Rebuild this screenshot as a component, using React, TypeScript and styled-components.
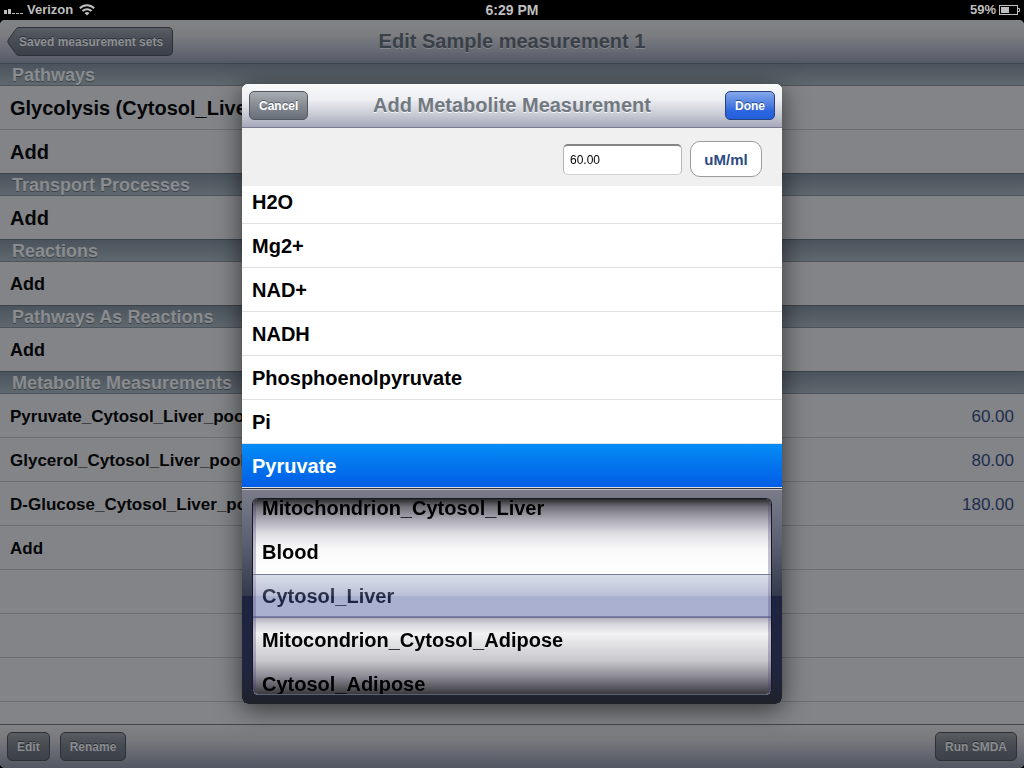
import React, { useState } from "react";
import styled, { createGlobalStyle, css } from "styled-components";

const GlobalStyle = createGlobalStyle`
  *, *::before, *::after { box-sizing: border-box; }
  html, body { margin: 0; padding: 0; background: #000; }
  body, button, input {
    font-family: "Liberation Sans", Arial, Helvetica, sans-serif;
  }
  button { cursor: pointer; }
  ul { list-style: none; margin: 0; padding: 0; }
`;

const Screen = styled.div`
  display: flex;
  flex-direction: column;
  min-height: 100vh;
  background: #000;
`;

const StatusBar = styled.div`
  display: grid;
  grid-template-columns: 1fr auto 1fr;
  align-items: center;
  height: 20px;
  padding: 0 4px;
  color: #bfbfbf;
  font-size: 13px;
  font-weight: bold;
  line-height: 20px;
`;

const Clock = styled.span`
  font-size: 14px;
`;

const StatusGroup = styled.div<{ $end?: boolean }>`
  display: flex;
  align-items: center;
  gap: 3px;
  justify-content: ${(p) => (p.$end ? "flex-end" : "flex-start")};
`;

const AppWindow = styled.div`
  flex: 1;
  display: flex;
  flex-direction: column;
  border-radius: 5px;
  overflow: hidden;
  background: #838487;
`;

const NavBar = styled.header`
  display: grid;
  grid-template-columns: 1fr auto 1fr;
  align-items: center;
  height: 44px;
  padding: 0 7px;
  border-bottom: 1px solid #3d414c;
  background: linear-gradient(#828385, #7b7d80 35%, #6e7079 60%, #555a67);
`;

const PageTitle = styled.h1`
  margin: 0;
  padding-bottom: 2px;
  color: #394047;
  font-size: 20px;
  line-height: 24px;
  text-shadow: 0 1px 0 #85868a;
`;

const BackButton = styled.button`
  display: flex;
  justify-self: start;
  height: 29px;
  padding: 0;
  border: 0;
  background: none;
  color: #8f9194;
  font-size: 12px;
  font-weight: bold;
  line-height: 28px;
  text-shadow: 0 -1px 0 #2b2f36;
`;

const BackLabel = styled.span`
  height: 29px;
  padding: 0 9px 0 0;
  border: 1px solid #2c3038;
  border-left: 0;
  border-radius: 0 5px 5px 0;
  background: linear-gradient(#595d63, #464b54 50%, #3b404a);
`;

const SectionTitle = styled.h2`
  position: relative;
  height: 23px;
  margin: -1px 0 0;
  padding: 0 12px;
  border-top: 1px solid #3b434b;
  border-bottom: 1px solid #4d545b;
  background: linear-gradient(#4b545d, #5f686e);
  color: #8a8c8f;
  font-size: 18px;
  line-height: 22px;
  text-shadow: 0 1px 0 #3c4349;
`;

const RowButton = styled.button<{ $size: number }>`
  display: flex;
  align-items: center;
  justify-content: space-between;
  width: 100%;
  height: 44px;
  padding: 2px 10px 0;
  border: 0;
  border-bottom: 1px solid #6c6d71;
  background: #838487;
  color: #050608;
  font-size: ${(p) => p.$size}px;
  font-weight: bold;
  text-align: left;
`;

const RowValue = styled.span`
  color: #1e2d4d;
  font-weight: normal;
`;

const EmptyRows = styled.div`
  flex: 1;
  background: repeating-linear-gradient(#838487 0 43px, #6c6d71 43px 44px);
`;

const Toolbar = styled.footer`
  display: flex;
  align-items: center;
  gap: 10px;
  height: 44px;
  padding: 0 7px;
  border-top: 1px solid #45464b;
  background: linear-gradient(#818284, #77797c 35%, #696b74 60%, #525763);
`;

const Spacer = styled.div`
  flex: 1;
`;

type Tone = "dim" | "gray" | "blue";

const tones = {
  dim: css`
    border-color: #2c3038;
    background: linear-gradient(#595d61, #464a51 50%, #3b404a);
    color: #8b8d90;
    text-shadow: 0 -1px 0 #2b2f36;
  `,
  gray: css`
    border-color: #53575e;
    background: linear-gradient(#a9adb3, #868b93 50%, #686e78);
    color: #fff;
    text-shadow: 0 -1px 0 #555a62;
  `,
  blue: css`
    border-color: #27427f;
    background: linear-gradient(#86a8ea, #4a7be0 50%, #2c66de 70%, #245fdc);
    color: #fff;
    text-shadow: 0 -1px 0 #2b4c94;
  `,
};

const BarButton = styled.button<{ $tone: Tone }>`
  height: 29px;
  padding: 1px 9px 0;
  border: 1px solid;
  border-radius: 5px;
  font-size: 12px;
  font-weight: bold;
  line-height: 27px;
  ${(p) => tones[p.$tone]}
`;

const Backdrop = styled.div`
  position: fixed;
  inset: 20px 0 0;
  display: flex;
  align-items: center;
  justify-content: center;
`;

const Sheet = styled.section`
  display: flex;
  flex-direction: column;
  width: 540px;
  max-width: 100%;
  height: 620px;
  max-height: 100%;
  border-radius: 6px;
  overflow: hidden;
  background: #fff;
  box-shadow: 0 5px 26px rgba(0, 0, 0, 0.6);
`;

const SheetBar = styled.header`
  flex: none;
  display: grid;
  grid-template-columns: 1fr auto 1fr;
  align-items: center;
  height: 44px;
  padding: 0 7px;
  border-bottom: 1px solid #797b92;
  background: linear-gradient(#f8f9fa, #eff0f3 35%, #cfd1da 65%, #a5a8ba);

  & > :first-child { justify-self: start; }
  & > :last-child { justify-self: end; }
`;

const SheetTitle = styled.h2`
  margin: 0;
  padding-bottom: 2px;
  color: #717880;
  font-size: 20px;
  line-height: 24px;
  text-shadow: 0 1px 0 #f4f5f7;
`;

const AmountBar = styled.div`
  flex: none;
  display: flex;
  align-items: center;
  justify-content: flex-end;
  gap: 8px;
  height: 58px;
  padding: 4px 20px 0;
  background: #f0f0f0;
`;

const AmountInput = styled.input`
  width: 119px;
  height: 31px;
  padding: 0 6px;
  border: 1px solid #b4b4b4;
  border-top: 2px solid #858585;
  border-bottom-color: #cfcfcf;
  border-radius: 5px;
  background: #fff;
  color: #000;
  font-size: 12px;
  outline: 0;
`;

const UnitButton = styled.button`
  width: 72px;
  height: 36px;
  padding: 1px 0 0;
  border: 1px solid #9b9b9b;
  border-radius: 10px;
  background: #fff;
  color: #2c4a83;
  font-size: 15px;
  font-weight: bold;
`;

const MetaboliteList = styled.div`
  flex: 1;
  min-height: 0;
  display: flex;
  flex-direction: column;
  justify-content: flex-end;
  overflow: hidden;
`;

const Metabolite = styled.button<{ $selected: boolean }>`
  flex: none;
  height: 44px;
  padding: 2px 10px 0;
  border: 0;
  border-bottom: 1px solid #e0e0e0;
  background: ${(p) => (p.$selected ? "linear-gradient(#058cf5, #015de6)" : "#fff")};
  color: ${(p) => (p.$selected ? "#fff" : "#000")};
  font-size: 20px;
  font-weight: bold;
  text-align: left;
`;

const Picker = styled.fieldset`
  flex: none;
  height: 216px;
  min-width: 0;
  margin: 0;
  padding: 9px 10px;
  border: 0;
  border-top: 1px solid #34353c;
  box-shadow: inset 0 1px 0 #c3c4cb;
  background: linear-gradient(#7a7c8a, #5b6072 25%, #33384b 50%, #1e2340 50%, #20253f 85%, #1f222a);
`;

const Wheel = styled.div`
  position: relative;
  display: flex;
  flex-direction: column;
  justify-content: center;
  height: 197px;
  border: 1px solid #17181d;
  border-bottom-color: #5d6273;
  border-radius: 6px;
  overflow: hidden;
  background: #fff;

  &::after {
    content: "";
    position: absolute;
    inset: 0;
    pointer-events: none;
    mix-blend-mode: multiply;
    background:
      linear-gradient(90deg, rgba(70, 55, 120, 0.3) 3px, transparent 3px calc(100% - 3px), rgba(70, 55, 120, 0.3) calc(100% - 3px)),
      linear-gradient(
        rgba(22, 22, 26, 0.92), rgba(40, 38, 50, 0.66) 4%, rgba(45, 42, 65, 0.42) 10%,
        rgba(60, 55, 85, 0.16) 18%, rgba(100, 110, 100, 0.04) 26%, transparent 39%,
        transparent 60%, rgba(45, 42, 75, 0.42) 60%, rgba(45, 42, 75, 0.2) 64%,
        rgba(40, 40, 60, 0.06) 69%, rgba(40, 38, 60, 0.26) 83%,
        rgba(35, 33, 50, 0.52) 91%, rgba(25, 25, 32, 0.86)
      );
  }
`;

const WheelOption = styled.label`
  flex: none;
  display: flex;
  align-items: center;
  height: 44px;
  padding: 0 9px;
  color: #000;
  font-size: 20px;
  font-weight: bold;
`;

const HiddenRadio = styled.input`
  appearance: none;
  width: 0;
  height: 0;
  margin: 0;
`;

const SelectionBand = styled.div`
  position: absolute;
  top: 50%;
  left: 0;
  right: 0;
  z-index: 1;
  height: 44px;
  margin-top: -23px;
  border-top: 1px solid #737f9d;
  border-bottom: 1px solid #656f91;
  pointer-events: none;
  background: linear-gradient(
    rgba(172, 181, 212, 0.45), rgba(100, 114, 160, 0.45) 50%,
    rgba(66, 80, 150, 0.45) 50%
  );
`;

const SignalIcon = () => (
  <svg width="20" height="10" viewBox="0 0 20 10" fill="#bfbfbf" aria-hidden="true">
    <rect x="0" y="5" width="3" height="4" />
    <rect x="4" y="4" width="3" height="5" />
    <rect x="8" y="8" width="3" height="1" />
    <rect x="12" y="8" width="3" height="1" />
    <rect x="16" y="8" width="3" height="1" />
  </svg>
);

const WifiIcon = () => (
  <svg width="24" height="12" viewBox="-3 0 24 12" fill="none" stroke="#bfbfbf" strokeWidth="2" aria-hidden="true">
    <path d="M0.8 4.3 C4.8 0.2 11.2 0.2 15.2 4.3" />
    <path d="M3.5 7 C6 4.5 10 4.5 12.5 7" />
    <path d="M5.5 8.9 C7 7.6 9 7.6 10.5 8.9 L8 11.4 Z" fill="#bfbfbf" stroke="none" />
  </svg>
);

const BatteryIcon = () => (
  <svg width="21" height="10" viewBox="0 0 21 10" aria-hidden="true">
    <rect x="0.5" y="0.5" width="18" height="9" fill="none" stroke="#bfbfbf" />
    <rect x="2" y="2" width="8" height="6" fill="#bfbfbf" />
    <path d="M19 3.5h1.5v3H19" fill="none" stroke="#bfbfbf" />
  </svg>
);

const BackCap = () => (
  <svg width="12" height="29" viewBox="0 0 12 29" aria-hidden="true">
    <defs>
      <linearGradient id="cap" x1="0" y1="0" x2="0" y2="1">
        <stop offset="0" stopColor="#595d63" />
        <stop offset="0.5" stopColor="#464b54" />
        <stop offset="1" stopColor="#3b404a" />
      </linearGradient>
    </defs>
    <path
      d="M12 0.5 C10.6 0.5 9.8 1 9 2.2 L1.4 12.6 Q0.2 14.5 1.4 16.4 L9 26.8 C9.8 28 10.6 28.5 12 28.5"
      fill="url(#cap)"
      stroke="#2c3038"
    />
  </svg>
);

type Row = { label: string; value?: string };

const sections: { title: string; size: number; rows: Row[] }[] = [
  { title: "Pathways", size: 20, rows: [{ label: "Glycolysis (Cytosol_Liver)" }, { label: "Add" }] },
  { title: "Transport Processes", size: 20, rows: [{ label: "Add" }] },
  { title: "Reactions", size: 18, rows: [{ label: "Add" }] },
  { title: "Pathways As Reactions", size: 18, rows: [{ label: "Add" }] },
  {
    title: "Metabolite Measurements",
    size: 17,
    rows: [
      { label: "Pyruvate_Cytosol_Liver_pool", value: "60.00" },
      { label: "Glycerol_Cytosol_Liver_pool", value: "80.00" },
      { label: "D-Glucose_Cytosol_Liver_pool", value: "180.00" },
      { label: "Add" },
    ],
  },
];

const metabolites = ["H2O", "Mg2+", "NAD+", "NADH", "Phosphoenolpyruvate", "Pi", "Pyruvate"];

const compartments = [
  "Mitochondrion_Cytosol_Liver",
  "Blood",
  "Cytosol_Liver",
  "Mitocondrion_Cytosol_Adipose",
  "Cytosol_Adipose",
];

export default function App() {
  const [metabolite, setMetabolite] = useState("Pyruvate");
  const [compartment, setCompartment] = useState("Cytosol_Liver");
  const [amount, setAmount] = useState("60.00");

  return (
    <Screen>
      <GlobalStyle />
      <StatusBar>
        <StatusGroup>
          <SignalIcon />
          <span>Verizon</span>
          <WifiIcon />
        </StatusGroup>
        <Clock>6:29 PM</Clock>
        <StatusGroup $end>
          <span>59%</span>
          <BatteryIcon />
        </StatusGroup>
      </StatusBar>

      <AppWindow>
        <NavBar>
          <BackButton>
            <BackCap />
            <BackLabel>Saved measurement sets</BackLabel>
          </BackButton>
          <PageTitle>Edit Sample measurement 1</PageTitle>
        </NavBar>
        {sections.map((section) => (
          <section key={section.title}>
            <SectionTitle>{section.title}</SectionTitle>
            <ul>
              {section.rows.map((row) => (
                <li key={row.label}>
                  <RowButton $size={section.size}>
                    <span>{row.label}</span>
                    {row.value && <RowValue>{row.value}</RowValue>}
                  </RowButton>
                </li>
              ))}
            </ul>
          </section>
        ))}
        <EmptyRows />
        <Toolbar>
          <BarButton $tone="dim">Edit</BarButton>
          <BarButton $tone="dim">Rename</BarButton>
          <Spacer />
          <BarButton $tone="dim">Run SMDA</BarButton>
        </Toolbar>
      </AppWindow>

      <Backdrop>
        <Sheet role="dialog" aria-modal="true" aria-labelledby="sheet-title">
          <SheetBar>
            <BarButton $tone="gray">Cancel</BarButton>
            <SheetTitle id="sheet-title">Add Metabolite Measurement</SheetTitle>
            <BarButton $tone="blue">Done</BarButton>
          </SheetBar>
          <AmountBar>
            <AmountInput
              aria-label="Amount"
              value={amount}
              onChange={(e) => setAmount(e.target.value)}
            />
            <UnitButton>uM/ml</UnitButton>
          </AmountBar>
          <MetaboliteList role="listbox" aria-label="Metabolite">
            {metabolites.map((name) => (
              <Metabolite
                key={name}
                role="option"
                aria-selected={name === metabolite}
                $selected={name === metabolite}
                onClick={() => setMetabolite(name)}
              >
                {name}
              </Metabolite>
            ))}
          </MetaboliteList>
          <Picker aria-label="Compartment">
            <Wheel>
              {compartments.map((name) => (
                <WheelOption key={name}>
                  <HiddenRadio
                    type="radio"
                    name="compartment"
                    checked={name === compartment}
                    onChange={() => setCompartment(name)}
                  />
                  {name}
                </WheelOption>
              ))}
              <SelectionBand />
            </Wheel>
          </Picker>
        </Sheet>
      </Backdrop>
    </Screen>
  );
}
